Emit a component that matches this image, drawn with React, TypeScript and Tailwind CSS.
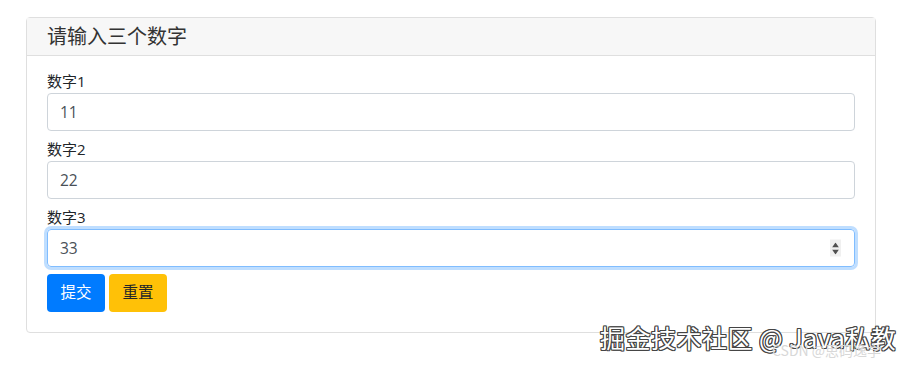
import React from "react";

const fields = [
  { label: "数字1", value: "11" },
  { label: "数字2", value: "22" },
  { label: "数字3", value: "33", focused: true },
];

function Spinner() {
  return (
    <span className="absolute right-[14px] top-1/2 flex h-[17px] w-[11px] -translate-y-1/2 flex-col items-center justify-center gap-[2px] bg-[#f0f0f0]">
      <svg width="7" height="5" viewBox="0 0 7 5">
        <path d="M3.5 0L7 5H0z" fill="#505050" />
      </svg>
      <svg width="7" height="5" viewBox="0 0 7 5">
        <path d="M0 0h7L3.5 5z" fill="#505050" />
      </svg>
    </span>
  );
}

export default function App() {
  return (
    <div
      className="relative h-[366px] w-[905px] bg-white pl-[26px] pt-[17px] text-[#212529]"
      style={{ fontFamily: '"Open Sans", "Noto Sans CJK SC", sans-serif' }}
    >
      <div className="w-[850px] rounded-[4px] border border-[#dfdfdf]">
        {/* card header */}
        <div className="flex h-[38px] items-center border-b border-[#dfdfdf] bg-[#f7f7f7] px-[20px] text-[20px] text-[#333]">
          请输入三个数字
        </div>

        {/* card body */}
        <div className="px-[20px] pb-[20px] pt-[13px]">
          {fields.map((f) => (
            <div key={f.label} className="mb-[6px]">
              <label className="block h-[24px] text-[15px] leading-[24px]">{f.label}</label>
              <div className="relative">
                <input
                  readOnly
                  value={f.value}
                  className={
                    f.focused
                      ? "h-[38px] w-full rounded-[4px] border border-[#80bdff] px-[12px] text-[15.5px] text-[#495057] shadow-[0_0_0_3px_rgba(0,123,255,0.25)] outline-none"
                      : "h-[38px] w-full rounded-[4px] border border-[#ced4da] px-[12px] text-[15.5px] text-[#495057] outline-none"
                  }
                />
                {f.focused && <Spinner />}
              </div>
            </div>
          ))}

          <div className="flex gap-[4px] pt-[1px]">
            <button className="h-[38px] w-[58px] rounded-[4px] bg-[#007bff] text-[15.5px] text-white">
              提交
            </button>
            <button className="h-[38px] w-[58px] rounded-[4px] bg-[#ffc107] text-[15.5px] text-[#212529]">
              重置
            </button>
          </div>
        </div>
      </div>

      {/* watermarks */}
      <div
        className="absolute left-[600px] top-[321px] text-[25px] leading-[32px] tracking-[0.5px] text-white"
        style={{
          fontFamily: '"Noto Sans CJK SC", sans-serif',
          textShadow:
            "1px 0 0 #444, -1px 0 0 #444, 0 1px 0 #444, 0 -1px 0 #444, 1px 1px 0 #444, -1px -1px 0 #444, 1px -1px 0 #444, -1px 1px 0 #444",
        }}
      >
        掘金技术社区 @ Java私教
      </div>
      <div
        className="absolute left-[772px] top-[340px] text-[14px] leading-[20px] text-[#d8d8d8]"
        style={{ fontFamily: '"Noto Sans CJK SC", sans-serif' }}
      >
        CSDN @思码逸学
      </div>
    </div>
  );
}
